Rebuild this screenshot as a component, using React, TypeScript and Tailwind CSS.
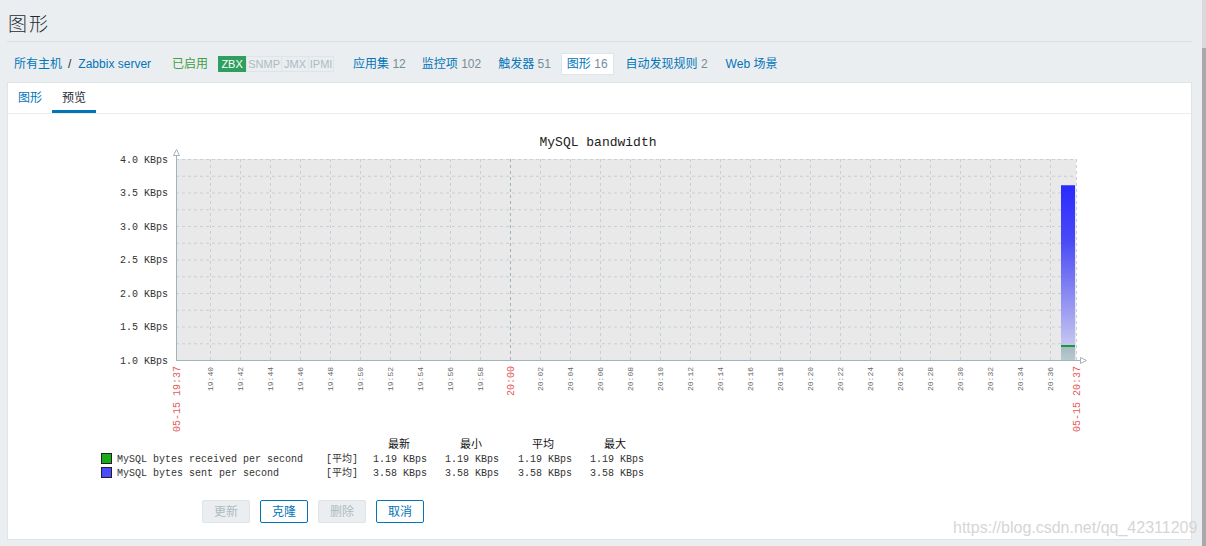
import React from "react";

const MONO = "'Liberation Mono', 'Noto Sans CJK SC', monospace";
const CJK = "'Noto Sans CJK SC', sans-serif";

function Chart() {
  const hLines = Array.from({ length: 12 }, (_, k) => 159 + k * 16.75);
  const vLines = Array.from({ length: 29 }, (_, k) => 210 + k * 30);
  const times = vLines.map((_, k) => {
    const total = 19 * 60 + 40 + k * 2;
    const h = Math.floor(total / 60);
    const m = total % 60;
    return `${h}:${m.toString().padStart(2, "0")}`;
  });
  const yLabels = ["4.0", "3.5", "3.0", "2.5", "2.0", "1.5", "1.0"];
  return (
    <svg width={1183} height={376} viewBox="8 114 1183 376" className="block">
      <defs>
        <linearGradient id="blueGrad" x1="0" y1="0" x2="0" y2="1">
          <stop offset="0" stopColor="#2a2aff" />
          <stop offset="0.35" stopColor="#4a4af6" />
          <stop offset="1" stopColor="#c6c6f0" />
        </linearGradient>
        <linearGradient id="grayGrad" x1="0" y1="0" x2="0" y2="1">
          <stop offset="0" stopColor="#a6bac2" />
          <stop offset="1" stopColor="#b8c9d0" />
        </linearGradient>
      </defs>
      <text x={598} y={146} textAnchor="middle" fontFamily={MONO} fontSize={13} fill="#222">
        MySQL bandwidth
      </text>
      <rect x={176} y={159} width={900} height={201} fill="#e9e9e9" />
      {hLines.map((y) => (
        <line key={y} x1={176} x2={1076} y1={y + 0.5} y2={y + 0.5} stroke="#c5d0d8" strokeDasharray="3 3" />
      ))}
      {vLines.map((x, k) => (
        <line
          key={x}
          x1={x + 0.5}
          x2={x + 0.5}
          y1={159}
          y2={360}
          stroke={k === 10 ? "#9fb2bb" : "#c5d0d8"}
          strokeDasharray="3 3"
        />
      ))}
      <line x1={1076.5} x2={1076.5} y1={159} y2={360} stroke="#c5d0d8" strokeDasharray="3 3" />
      {/* bar */}
      <rect x={1061} y={185} width={14} height={160} fill="url(#blueGrad)" />
      <rect x={1061} y={185} width={14} height={1} fill="#5858ff" />
      <rect x={1061} y={345} width={14} height={2} fill="#179a3c" />
      <rect x={1061} y={347} width={14} height={13} fill="url(#grayGrad)" />
      {/* axes */}
      <line x1={176.5} x2={176.5} y1={154} y2={361} stroke="#a2b3bb" />
      <polygon points="173.5,155.5 179.5,155.5 176.5,149.5" fill="#fff" stroke="#a2b3bb" />
      <line x1={176} x2={1081} y1={360.5} y2={360.5} stroke="#a2b3bb" />
      <polygon points="1080.5,357.5 1080.5,363.5 1086.5,360.5" fill="#fff" stroke="#a2b3bb" />
      {yLabels.map((v, i) => (
        <text
          key={v}
          x={168}
          y={159 + i * 33.5 + 3.5}
          textAnchor="end"
          fontFamily={MONO}
          fontSize={10}
          fill="#333"
        >
          {`${v} KBps`}
        </text>
      ))}
      {vLines.map((x, k) =>
        k === 10 ? (
          <text
            key={x}
            x={x + 4}
            y={366}
            textAnchor="end"
            transform={`rotate(-90 ${x + 4} 366)`}
            fontFamily={MONO}
            fontSize={10}
            fill="#e45a5a"
          >
            {times[k]}
          </text>
        ) : (
          <text
            key={x}
            x={x + 3}
            y={367}
            textAnchor="end"
            transform={`rotate(-90 ${x + 3} 367)`}
            fontFamily={MONO}
            fontSize={8}
            fill="#666"
          >
            {times[k]}
          </text>
        )
      )}
      <text
        x={180}
        y={366}
        textAnchor="end"
        transform="rotate(-90 180 366)"
        fontFamily={MONO}
        fontSize={10}
        fill="#e45a5a"
      >
        05-15 19:37
      </text>
      <text
        x={1080}
        y={366}
        textAnchor="end"
        transform="rotate(-90 1080 366)"
        fontFamily={MONO}
        fontSize={10}
        fill="#e45a5a"
      >
        05-15 20:37
      </text>
      {/* legend */}
      {[
        ["最新", 399],
        ["最小", 471],
        ["平均", 543],
        ["最大", 615],
      ].map(([t, x]) => (
        <text key={t as string} x={x as number} y={448} textAnchor="middle" fontFamily={CJK} fontSize={11} fill="#111">
          {t}
        </text>
      ))}
      <rect x={101.5} y={453.5} width={10} height={10} fill="#1aaa1a" stroke="#222" />
      <rect x={101.5} y={467.5} width={10} height={10} fill="#4b4bff" stroke="#222" />
      {[
        ["MySQL bytes received per second", "1.19 KBps", 462],
        ["MySQL bytes sent per second", "3.58 KBps", 476],
      ].map(([name, val, y]) => (
        <g key={name as string} fontFamily={MONO} fontSize={10} fill="#333">
          <text x={117} y={y as number}>{name}</text>
          <text x={326} y={y as number}>[平均]</text>
          <text x={373} y={y as number}>{val}</text>
          <text x={445} y={y as number}>{val}</text>
          <text x={518} y={y as number}>{val}</text>
          <text x={590} y={y as number}>{val}</text>
        </g>
      ))}
    </svg>
  );
}

function Btn({ label, disabled }: { label: string; disabled?: boolean }) {
  return (
    <button
      className={
        disabled
          ? "w-[48px] h-[23px] rounded-[2px] border border-[#dfe4e7] bg-[#ebeef0] text-[#acbbc2] text-[12px] flex items-center justify-center"
          : "w-[48px] h-[23px] rounded-[2px] border border-[#0275b8] bg-white text-[#0275b8] text-[12px] flex items-center justify-center"
      }
    >
      {label}
    </button>
  );
}

export default function App() {
  return (
    <div className="relative flex w-[1206px] h-[546px] overflow-hidden bg-[#ebeef0] font-['Liberation_Sans','Noto_Sans_CJK_SC',sans-serif] text-[12px]">
      <div className="w-[1202px] pl-[7px] pr-[10px]">
        <div className="h-[42px] border-b border-[#dcdfe2] pl-[1px] pt-[13px]">
          <h1 className="text-[19px] leading-[24px] text-[#1f2c33] tracking-[2px] font-light">图形</h1>
        </div>
        <div className="flex items-center h-[40px] pt-[3px] whitespace-nowrap">
          <span className="ml-[7px] text-[#0275b8]">所有主机</span>
          <span className="ml-[6px] text-[#1f2c33]">/</span>
          <span className="ml-[7px] text-[#0275b8]">Zabbix server</span>
          <span className="ml-[21px] text-[#429e47]">已启用</span>
          <div className="ml-[10px] flex h-[16px] text-[11px] leading-[14px]">
            <span className="w-[28px] bg-[#2f9f5f] border border-[#2f9f5f] text-white text-center">ZBX</span>
            <span className="w-[36px] bg-[#ebeef0] border border-[#dfe4e7] text-[#acbbc2] text-center">SNMP</span>
            <span className="w-[27px] bg-[#ebeef0] border-y border-r border-[#dfe4e7] text-[#acbbc2] text-center">JMX</span>
            <span className="w-[25px] bg-[#ebeef0] border-y border-r border-[#dfe4e7] text-[#acbbc2] text-center">IPMI</span>
          </div>
          <span className="ml-[19px] text-[#0275b8]">
            应用集 <span className="text-[#768d99]">12</span>
          </span>
          <span className="ml-[16px] text-[#0275b8]">
            监控项 <span className="text-[#768d99]">102</span>
          </span>
          <span className="ml-[17px] text-[#0275b8]">
            触发器 <span className="text-[#768d99]">51</span>
          </span>
          <span className="ml-[10px] h-[22px] flex items-center px-[5px] bg-white border border-[#dfe4e7] text-[#0275b8]">
            图形&nbsp;<span className="text-[#768d99]">16</span>
          </span>
          <span className="ml-[12px] text-[#0275b8]">
            自动发现规则 <span className="text-[#768d99]">2</span>
          </span>
          <span className="ml-[18px] text-[#0275b8]">Web 场景</span>
        </div>
        <div className="w-[1185px] h-[458px] bg-white border border-[#dfe4e7]">
          <div className="flex h-[31px] border-b border-[#ebeef0]">
            <div className="px-[10px] flex items-center text-[#0275b8]">图形</div>
            <div className="px-[10px] flex items-center text-[#1f2c33] border-b-[3px] border-[#0275b8] pt-[3px]">预览</div>
          </div>
          <Chart />
          <div className="flex gap-[10px] pl-[194px] pt-[10px]">
            <Btn label="更新" disabled />
            <Btn label="克隆" />
            <Btn label="删除" disabled />
            <Btn label="取消" />
          </div>
        </div>
      </div>
      <div className="w-[4px] h-full flex flex-col bg-[#dadada]">
        <div className="h-[48px]" />
        <div className="flex-1 bg-[#a9a9a9]" />
      </div>
      <div className="absolute left-[953px] top-[516px] text-[16px] text-[#d6d6d6] font-['Liberation_Sans',sans-serif] whitespace-nowrap">
        https://blog.csdn.net/qq_42311209
      </div>
    </div>
  );
}
